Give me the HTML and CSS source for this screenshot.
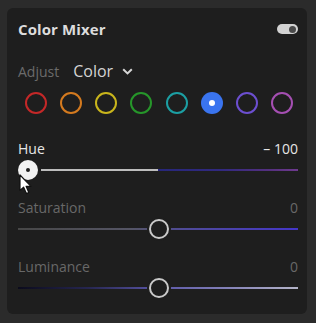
FILE: index.html
```html
<!DOCTYPE html>
<html lang="en">
<head>
    <meta charset="UTF-8">
    <title>Color Mixer</title>
    <link rel="stylesheet" href="styles.css">
</head>
<body>
    <div class="panel">
        <div class="header">
            <div class="title">Color Mixer</div>
            <div class="toggle"><div class="knob"></div></div>
        </div>

        <div class="adjust">
            <span class="adjust-label">Adjust</span>
            <span class="adjust-value">Color</span>
            <svg class="chevron" width="11" height="7" viewBox="0 0 11 7">
                <path d="M1.2 1.2 L5.5 5.4 L9.8 1.2" fill="none" stroke="#d6d6d6" stroke-width="2"/>
            </svg>
        </div>

        <div class="swatches">
            <div class="swatch red"></div>
            <div class="swatch orange"></div>
            <div class="swatch yellow"></div>
            <div class="swatch green"></div>
            <div class="swatch aqua"></div>
            <div class="swatch blue selected"><div class="dot"></div></div>
            <div class="swatch purple"></div>
            <div class="swatch magenta"></div>
        </div>

        <div class="group">
            <div class="label-row active">
                <span>Hue</span>
                <span>&ndash; 100</span>
            </div>
            <div class="slider">
                <div class="line hue-line">
                    <div class="hue-grey"></div>
                    <div class="hue-color"></div>
                </div>
                <div class="thumb solid at-min"><div class="pin"></div></div>
                <svg class="cursor" width="14" height="21" viewBox="0 0 14 21">
                    <path d="M1 1 L1 16.5 L4.6 13.2 L7.4 19.6 L9.8 18.5 L7.1 12.3 L12 12.3 Z" fill="#ffffff" stroke="#111111" stroke-width="1.2" stroke-linejoin="round"/>
                </svg>
            </div>
        </div>

        <div class="group">
            <div class="label-row">
                <span>Saturation</span>
                <span>0</span>
            </div>
            <div class="slider">
                <div class="line sat-line"></div>
                <div class="thumb ring at-mid"></div>
            </div>
        </div>

        <div class="group">
            <div class="label-row">
                <span>Luminance</span>
                <span>0</span>
            </div>
            <div class="slider">
                <div class="line lum-line"></div>
                <div class="thumb ring at-mid"></div>
            </div>
        </div>
    </div>
</body>
</html>
```

FILE: styles.css
```css
* {
    box-sizing: border-box;
}

body {
    margin: 0;
    padding: 8px 9px 9px 7px;
    background: #2b2b2b;
    font-family: "Open Sans", "Noto Sans", sans-serif;
}

.panel {
    width: 300px;
    height: 306px;
    background: #1e1e1e;
    border-radius: 6px;
    padding: 8px 9px 0 11px;
}

.header {
    height: 26px;
    display: flex;
    align-items: center;
    justify-content: space-between;
}

.title {
    font-size: 15px;
    font-weight: 700;
    color: #dcdcdc;
    letter-spacing: 0.1px;
}

.toggle {
    width: 21px;
    height: 10px;
    border-radius: 5px;
    background: #d2d2d2;
    display: flex;
    align-items: center;
    justify-content: flex-end;
    padding-right: 2px;
    margin-right: 0;
}

.knob {
    width: 7px;
    height: 7px;
    border-radius: 50%;
    background: #4a4a4a;
}

.adjust {
    margin-top: 18px;
    height: 22px;
    display: flex;
    align-items: center;
}

.adjust-label {
    font-size: 14px;
    color: #6b6b6b;
}

.adjust-value {
    font-size: 16px;
    color: #d4d4d4;
    margin-left: 14px;
}

.chevron {
    margin-left: 9px;
}

.swatches {
    margin-top: 10px;
    height: 22px;
    display: flex;
    justify-content: space-between;
    padding: 0 5px 0 7px;
}

.swatch {
    width: 22px;
    height: 22px;
    border-radius: 50%;
    border: 2.5px solid;
}

.red { border-color: #c42828; }
.orange { border-color: #d47a1f; }
.yellow { border-color: #c9b51c; }
.green { border-color: #26962a; }
.aqua { border-color: #1c9fa3; }
.purple { border-color: #6c4fd0; }
.magenta { border-color: #a54fb2; }

.blue.selected {
    border: none;
    background: #3a74ef;
    display: flex;
    align-items: center;
    justify-content: center;
}

.dot {
    width: 6px;
    height: 6px;
    border-radius: 50%;
    background: #ffffff;
}

.group {
    margin-top: 25px;
}

.group + .group {
    margin-top: 17px;
}

.label-row {
    height: 18px;
    display: flex;
    align-items: center;
    justify-content: space-between;
    font-size: 14px;
    color: #686868;
}

.label-row.active {
    color: #e6e6e6;
}

.slider {
    position: relative;
    margin-top: 2px;
    height: 22px;
    display: flex;
    align-items: center;
}

.line {
    width: 100%;
    height: 2px;
}

.hue-line {
    display: flex;
    margin-left: 23px;
}

.hue-grey {
    width: 117px;
    background: #bdbdbd;
}

.hue-color {
    flex: 1;
    background: linear-gradient(to right, #27277a, #31297f 45%, #55307f 80%, #6e3a8e);
}

.sat-line {
    background: linear-gradient(to right, #474747, #555565 40%, #4f4a9a 60%, #4436c8);
}

.lum-line {
    background: linear-gradient(to right, #0b0b1c, #262650 25%, #5a56a8 50%, #8482b8 75%, #b4b4c8);
}

.thumb {
    position: absolute;
    top: 1px;
    width: 20px;
    height: 20px;
    border-radius: 50%;
}

.thumb.solid {
    background: #f2f2f2;
    display: flex;
    align-items: center;
    justify-content: center;
}

.pin {
    width: 4px;
    height: 4px;
    border-radius: 50%;
    background: #1e1e1e;
}

.thumb.ring {
    background: #1e1e1e;
    border: 2.5px solid #cacaca;
    box-shadow: 0 0 0 2px #1e1e1e;
}

.at-min {
    left: 0;
}

.at-mid {
    left: 131px;
}

.cursor {
    position: absolute;
    left: 1px;
    top: 15px;
}
```
